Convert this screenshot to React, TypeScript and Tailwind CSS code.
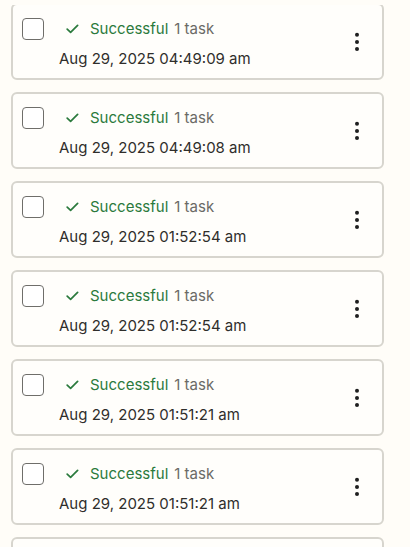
import React from "react";

const dates = [
  "Aug 29, 2025 04:49:09 am",
  "Aug 29, 2025 04:49:08 am",
  "Aug 29, 2025 01:52:54 am",
  "Aug 29, 2025 01:52:54 am",
  "Aug 29, 2025 01:51:21 am",
  "Aug 29, 2025 01:51:21 am",
];

function Card({ date }: { date?: string }) {
  return (
    <div className="flex h-[77px] shrink-0 items-start rounded-[6px] border-2 border-[#d7d5ce] bg-[#fffefb] pl-[9px] pr-[22px]">
      {date && (
        <>
          <div className="mt-[13px] h-[22px] w-[22px] shrink-0 rounded-[4px] border-[1.5px] border-[#6f6e6a] bg-white" />
          <div className="ml-[15px] flex flex-1 flex-col pt-[13px]">
            <div className="flex h-[22px] items-center pl-[7px]">
              <svg width="13" height="10" viewBox="0 0 13 10" className="shrink-0">
                <path d="M1.2 5.2 L4.6 8.4 L11.6 1.4" fill="none" stroke="#2b7a3d" strokeWidth="1.7" strokeLinecap="round" strokeLinejoin="round" />
              </svg>
              <span className="ml-[11px] text-[15px] text-[#2b7a3d]">Successful</span>
              <span className="ml-[6px] text-[15px] text-[#6b6a66]">1 task</span>
            </div>
            <div className="mt-[8px] flex h-[22px] items-center text-[15px] font-normal text-[#2f2e2b]">
              {date}
            </div>
          </div>
          <div className="flex h-full items-center">
            <svg width="6" height="22" viewBox="0 0 6 22">
              <circle cx="3" cy="3.8" r="2" fill="#1f1f1f" />
              <circle cx="3" cy="11" r="2" fill="#1f1f1f" />
              <circle cx="3" cy="18" r="2" fill="#1f1f1f" />
            </svg>
          </div>
        </>
      )}
    </div>
  );
}

export default function App() {
  return (
    <div
      className="h-[547px] w-[410px] overflow-hidden bg-[#fffdf8]"
      style={{ fontFamily: "Inter, 'Noto Sans', sans-serif" }}
    >
      <div className="mt-[5px] h-[542px] overflow-hidden">
        <div className="ml-[11px] mt-[-2px] flex w-[373px] flex-col gap-[12px]">
          {dates.map((d, i) => (
            <Card key={i} date={d} />
          ))}
          <Card />
        </div>
      </div>
    </div>
  );
}
